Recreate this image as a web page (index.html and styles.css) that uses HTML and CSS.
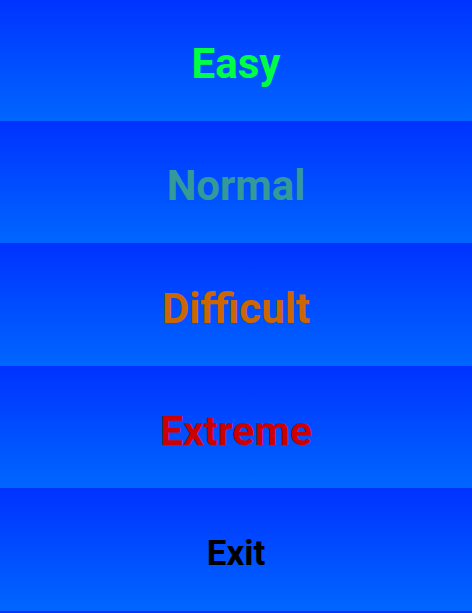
FILE: index.html
```html
<!DOCTYPE html>
<html>
<head>
<meta charset="utf-8">
<link rel="stylesheet" href="styles.css">
</head>
<body>
<div class="menu">
  <div class="btn easy">Easy</div>
  <div class="btn normal">Normal</div>
  <div class="btn difficult">Difficult</div>
  <div class="btn extreme">Extreme</div>
  <div class="btn exit">Exit</div>
</div>
</body>
</html>
```
FILE: styles.css
```css
html, body {
  margin: 0;
  padding: 0;
  background: #0033ff;
}
.menu {
  display: flex;
  flex-direction: column;
  height: 613px;
}
.btn {
  flex: 1;
  display: flex;
  align-items: center;
  justify-content: center;
  padding-top: 6px;
  background: linear-gradient(to bottom, #0033ff 0%, #0066ff 100%);
  border-bottom: 2px solid #0033ff;
  font-family: Roboto, "Liberation Sans", sans-serif;
  font-weight: 700;
  font-size: 42px;
}
.easy { color: #00ff44; }
.normal { color: #339999; }
.difficult { color: #cc6600; }
.extreme { color: #cc0000; font-size: 41px; }
.exit { color: #000000; font-size: 35px; }
```
